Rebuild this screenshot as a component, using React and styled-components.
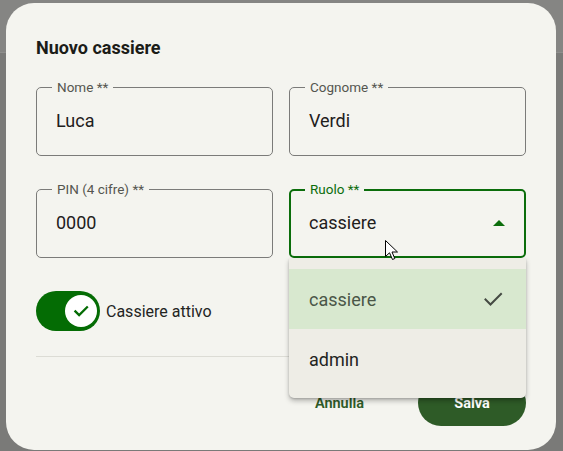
import React from 'react';
import styled, { createGlobalStyle } from 'styled-components';

const GlobalStyle = createGlobalStyle`
  html, body {
    margin: 0;
    padding: 0;
  }
  body {
    font-family: Roboto, "Liberation Sans", sans-serif;
  }
`;

const Page = styled.div`
  position: relative;
  width: 563px;
  height: 451px;
  overflow: hidden;
  padding: 3px 0 0 6px;
  box-sizing: border-box;
  background: linear-gradient(
    to bottom,
    #858583 0,
    #858583 52px,
    #8f8f8d 52px,
    #8f8f8d 53px,
    #7a7a78 53px
  );
`;

const Dialog = styled.div`
  width: 550px;
  height: 447px;
  box-sizing: border-box;
  background: #f4f4ef;
  border-radius: 28px;
  padding: 33px 30px 24px;
  display: flex;
  flex-direction: column;
`;

const Title = styled.h2`
  margin: 0;
  font-size: 18px;
  line-height: 24px;
  font-weight: 700;
  color: #1b1c18;
`;

const Grid = styled.div`
  margin-top: 27px;
  display: grid;
  grid-template-columns: 237px 237px;
  column-gap: 16px;
  row-gap: 33px;
`;

const Field = styled.div`
  position: relative;
  height: 69px;
  box-sizing: border-box;
  border: ${(p) => (p.$focused ? '2px solid #0b6d0b' : '1px solid #7b7b79')};
  border-radius: 5px;
  display: flex;
  align-items: center;
  padding: 0 ${(p) => (p.$focused ? '18px' : '19px')} 2px;
  font-size: 18px;
  color: #1f201c;
`;

const Label = styled.span`
  position: absolute;
  top: ${(p) => (p.$focused ? '-10px' : '-9px')};
  left: ${(p) => (p.$focused ? '14px' : '15px')};
  padding: 0 5px;
  background: #f4f4ef;
  font-size: 13.5px;
  line-height: 16px;
  color: ${(p) => (p.$focused ? '#0b6d0b' : '#55564f')};
`;

const Value = styled.span`
  flex: 1;
`;

const Arrow = styled.span`
  width: 0;
  height: 0;
  border-left: 6.5px solid transparent;
  border-right: 6.5px solid transparent;
  border-bottom: 6px solid #0b6d0b;
  margin-right: 1px;
`;

const Menu = styled.div`
  position: absolute;
  top: calc(100% + 2px);
  left: -2px;
  width: 237px;
  padding: 11px 0 9px;
  background: #eeede6;
  border-radius: 0 0 5px 5px;
  box-shadow: 0 3px 5px rgba(0, 0, 0, 0.25), 0 1px 2px rgba(0, 0, 0, 0.15);
  z-index: 2;
`;

const MenuItem = styled.div`
  height: 60px;
  display: flex;
  align-items: center;
  justify-content: space-between;
  padding: 0 21px 0 20px;
  font-size: 18px;
  background: ${(p) => (p.$selected ? '#d8e8cf' : 'transparent')};
  color: ${(p) => (p.$selected ? '#4a5647' : '#23241f')};
`;

const SwitchRow = styled.div`
  margin-top: 33px;
  display: flex;
  align-items: center;
  gap: 6px;
`;

const Switch = styled.div`
  width: 64px;
  height: 40px;
  border-radius: 20px;
  background: #046c04;
  display: flex;
  align-items: center;
  justify-content: flex-end;
  padding: 0 3px;
  box-sizing: border-box;
`;

const Thumb = styled.div`
  width: 32px;
  height: 32px;
  border-radius: 50%;
  background: #ffffff;
  display: flex;
  align-items: center;
  justify-content: center;
`;

const SwitchLabel = styled.span`
  font-size: 16px;
  color: #23241f;
`;

const Divider = styled.div`
  margin-top: 25px;
  height: 1px;
  background: #dcdcd5;
`;

const Actions = styled.div`
  margin-top: 23px;
  display: flex;
  justify-content: flex-end;
  align-items: center;
  gap: 44px;
`;

const Button = styled.button`
  height: 46px;
  border: none;
  border-radius: 23px;
  font-family: Roboto, "Liberation Sans", sans-serif;
  font-size: 14.5px;
  font-weight: ${(p) => (p.$filled ? 700 : 600)};
  cursor: pointer;
  padding: 0 ${(p) => (p.$filled ? '0' : '10px')};
  width: ${(p) => (p.$filled ? '108px' : 'auto')};
  background: ${(p) => (p.$filled ? '#2e5b27' : 'transparent')};
  color: ${(p) => (p.$filled ? '#ffffff' : '#2e5b27')};
`;

const Cursor = styled.svg`
  position: absolute;
  left: 385px;
  top: 240px;
  z-index: 5;
`;

const Check = ({ size, color, width }) => (
  <svg width={size} height={size} viewBox="0 0 24 24" fill="none">
    <path d="M4.5 12.5l5 5L20 7" stroke={color} strokeWidth={width} strokeLinecap="square" />
  </svg>
);

export default function App() {
  return (
    <Page>
      <GlobalStyle />
      <Dialog>
        <Title>Nuovo cassiere</Title>
        <Grid>
          <Field>
            <Label>Nome **</Label>
            <Value>Luca</Value>
          </Field>
          <Field>
            <Label>Cognome **</Label>
            <Value>Verdi</Value>
          </Field>
          <Field>
            <Label>PIN (4 cifre) **</Label>
            <Value>0000</Value>
          </Field>
          <Field $focused>
            <Label $focused>Ruolo **</Label>
            <Value>cassiere</Value>
            <Arrow />
            <Menu>
              <MenuItem $selected>
                cassiere
                <Check size={24} color="#454a43" width={2} />
              </MenuItem>
              <MenuItem>admin</MenuItem>
            </Menu>
          </Field>
        </Grid>
        <SwitchRow>
          <Switch>
            <Thumb>
              <Check size={18} color="#046c04" width={3} />
            </Thumb>
          </Switch>
          <SwitchLabel>Cassiere attivo</SwitchLabel>
        </SwitchRow>
        <Divider />
        <Actions>
          <Button>Annulla</Button>
          <Button $filled>Salva</Button>
        </Actions>
      </Dialog>
      <Cursor width="14" height="22" viewBox="0 0 14 22">
        <path d="M0.5 0.5 L0.5 16.5 L4.5 12.8 L7.5 19.5 L9.8 18.5 L7 12 L12.5 12 Z" fill="#ffffff" stroke="#000000" strokeWidth="1" />
      </Cursor>
    </Page>
  );
}
